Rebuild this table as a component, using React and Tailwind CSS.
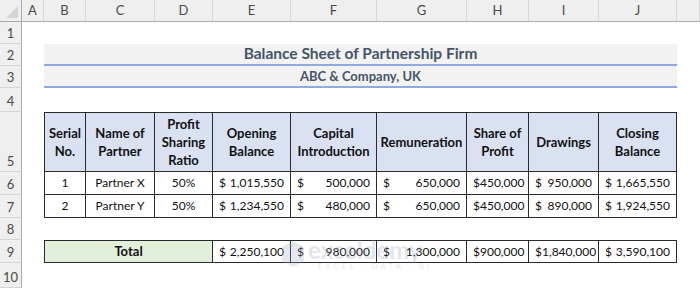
import React from 'react';

const cols = 'grid grid-cols-[22px_22px_42px_69px_58px_78px_86px_90px_62px_70px_78px_1fr]';
const letters = ['A', 'B', 'C', 'D', 'E', 'F', 'G', 'H', 'I', 'J', ''];

const partners = [
  { sn: '1', name: 'Partner X', ratio: '50%', open: '1,015,550', cap: '500,000', rem: '650,000', share: '450,000', draw: '950,000', close: '1,665,550' },
  { sn: '2', name: 'Partner Y', ratio: '50%', open: '1,234,550', cap: '480,000', rem: '650,000', share: '450,000', draw: '890,000', close: '1,924,550' },
];

const Row = ({ n, h, children }) => (
  <div className={`${cols} ${h}`}>
    <div className="flex items-end justify-center pb-[2px] bg-[#efefef] border-r border-[#ababab] border-b border-b-[#d6d6d6] text-[13px] leading-[16px] text-[#4a4a4a]">
      {n}
    </div>
    <div />
    {children}
  </div>
);

const Money = ({ value, className = '' }) => (
  <div className={`flex items-center justify-between pl-[6px] pr-[6px] border-r border-b border-[#2b2b2b] ${className}`}>
    <span>$</span>
    <span>{value}</span>
  </div>
);

const Cell = ({ children, className = '' }) => (
  <div className={`flex items-center justify-center text-center border-r border-b border-[#2b2b2b] ${className}`}>
    {children}
  </div>
);

const App = () => {
  return (
    <div className="relative w-[700px] h-[288px] overflow-hidden bg-white text-[12px] text-[#111] font-['Lato','Liberation_Sans',sans-serif]">
      {/* column letters */}
      <div className={`${cols} h-[22px] bg-[#efefef] border-b border-[#ababab]`}>
        <div className="relative border-r border-[#ababab]">
          <svg className="absolute right-[3px] bottom-[3px]" width="12" height="12" viewBox="0 0 12 12">
            <polygon points="12,0 12,12 0,12" fill="#d4d4d4" />
          </svg>
        </div>
        {letters.map((l, i) => (
          <div key={i} className="flex items-center justify-center border-r border-[#d6d6d6] text-[13px] text-[#4a4a4a]">
            {l}
          </div>
        ))}
      </div>

      <Row n="1" h="h-[22px]" />

      <Row n="2" h="h-[22px]">
        <div className="col-span-9 flex items-center justify-center h-[22px] bg-[#f2f2f2] border-b-2 border-[#8faadc] text-[15.5px] leading-none font-bold text-[#44546a]">
          Balance Sheet of Partnership Firm
        </div>
      </Row>

      <Row n="3" h="h-[22px]">
        <div className="col-span-9 flex items-center justify-center h-[22px] bg-[#f2f2f2] border-b-2 border-[#8faadc] text-[13px] leading-none font-bold text-[#44546a]">
          ABC &amp; Company, UK
        </div>
      </Row>

      <Row n="4" h="h-[24px]" />

      <Row n="5" h="h-[60px]">
        {[
          ['Serial', 'No.'],
          ['Name of', 'Partner'],
          ['Profit', 'Sharing', 'Ratio'],
          ['Opening', 'Balance'],
          ['Capital', 'Introduction'],
          ['Remuneration'],
          ['Share of', 'Profit'],
          ['Drawings'],
          ['Closing', 'Balance'],
        ].map((lines, i) => (
          <Cell key={i} className={`bg-[#d9e1f2] text-[13px] font-bold leading-[18px] border-t ${i === 0 ? 'border-l' : ''}`}>
            <div>
              {lines.map((t) => (
                <div key={t}>{t}</div>
              ))}
            </div>
          </Cell>
        ))}
      </Row>

      {partners.map((p, i) => (
        <Row key={p.sn} n={String(6 + i)} h="h-[23px]">
          <Cell className="border-l">{p.sn}</Cell>
          <Cell>{p.name}</Cell>
          <Cell>{p.ratio}</Cell>
          <Money value={p.open} />
          <Money value={p.cap} />
          <Money value={p.rem} />
          <Money value={p.share} />
          <Money value={p.draw} />
          <Money value={p.close} />
        </Row>
      ))}

      <Row n="8" h="h-[22px]" />

      <Row n="9" h="h-[23px]">
        <Cell className="col-span-3 border-l border-t bg-[#e2efda] text-[13px] font-bold">Total</Cell>
        <Money value="2,250,100" className="border-t" />
        <Money value="980,000" className="border-t" />
        <Money value="1,300,000" className="border-t" />
        <Money value="900,000" className="border-t" />
        <Money value="1,840,000" className="border-t" />
        <Money value="3,590,100" className="border-t" />
      </Row>

      <Row n="10" h="h-[25px]" />

      {/* watermark */}
      <div className="absolute left-[282px] top-[238px] flex items-center gap-[4px] opacity-25 pointer-events-none">
        <svg width="22" height="26" viewBox="0 0 22 26">
          <polygon points="11,0 22,6 22,20 11,26 0,20 0,6" fill="#9aa8c4" />
        </svg>
        <div className="flex flex-col leading-none">
          <span className="text-[24px] font-bold text-[#8d9cc0]">exceldemy</span>
          <span className="text-[8px] tracking-[3px] text-[#9aa3b5] pl-[10px]">EXCEL · DATA · BI</span>
        </div>
      </div>
    </div>
  );
};

export default App;
